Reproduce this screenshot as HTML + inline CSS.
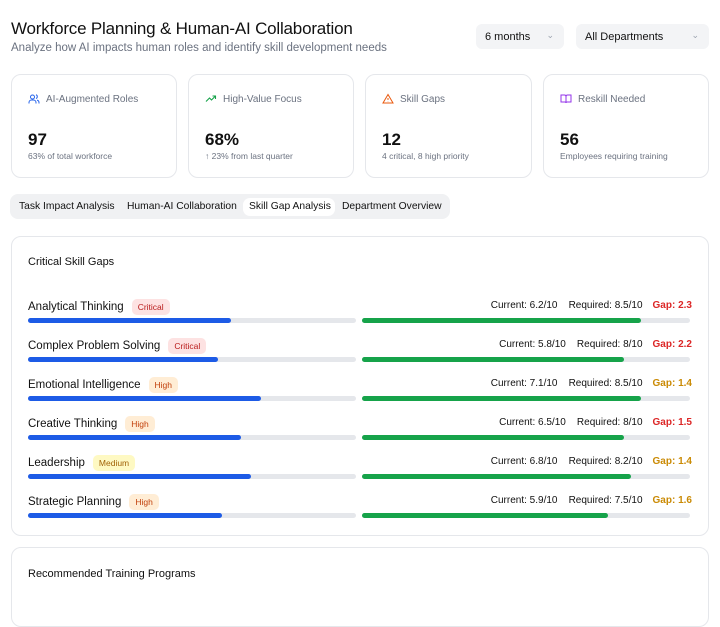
<!DOCTYPE html>
<html><head><style>
*{box-sizing:border-box;margin:0;padding:0}
body{width:720px;height:590px;overflow:hidden;background:#fff;font-family:"Liberation Sans",sans-serif;color:#111;position:relative}
.abs{position:absolute}
h1{position:absolute;left:11px;top:19px;font-size:17px;font-weight:normal;letter-spacing:-0.2px}
.sub{left:11px;top:42px;font-size:11.5px;color:#6b7280}
.sel{top:24px;height:25px;background:#f3f4f6;border-radius:6px;font-size:11px;padding:7px 9px;color:#111}
.sel span{position:absolute;right:10px;top:6px;color:#9ca3af;font-size:9px}
.card{top:74px;height:104px;border:1px solid #e5e7eb;border-radius:10px}
.card .t{position:absolute;left:16px;top:18px;font-size:10px;color:#6b7280;display:flex;align-items:center;gap:6px}
.card .n{position:absolute;left:16px;top:55px;font-size:17px;font-weight:bold}
.card .s{position:absolute;left:16px;top:76px;font-size:8.5px;color:#6b7280}
.tabs{left:10px;top:194px;width:440px;height:25px;background:#f0f1f3;border-radius:8px;font-size:10.3px;white-space:nowrap}
.tabs div{position:absolute;top:4px;height:18px;padding:3px 6px}
.main{left:11px;top:236px;width:698px;height:300px;border:1px solid #e5e7eb;border-radius:10px}
.row{position:absolute;left:28px;width:664px}
.lab{position:absolute;left:0;top:0;font-size:11.5px;display:flex;align-items:center;gap:8px;white-space:nowrap}
.b{font-size:8.5px;padding:3px 6px;border-radius:5px}
.cr{background:#fde2e2;color:#b91c1c}.hi{background:#ffedd5;color:#c2410c}.me{background:#fef9c3;color:#a16207}
.r{position:absolute;right:0;top:1px;font-size:10px;white-space:nowrap}
.r b{margin-left:10px}
.tr{position:absolute;top:19px;height:5px;border-radius:3px;background:#e5e7eb;width:328px}
.tr i{display:block;height:5px;border-radius:3px}
</style></head><body>
<h1>Workforce Planning &amp; Human-AI Collaboration</h1>
<div class="abs sub">Analyze how AI impacts human roles and identify skill development needs</div>
<div class="abs sel" style="left:476px;width:88px">6 months<span>⌄</span></div>
<div class="abs sel" style="left:576px;width:133px">All Departments<span>⌄</span></div>

<div class="abs card" style="left:11px;width:166px"><div class="t"><svg width="12" height="12" viewBox="0 0 24 24" fill="none" stroke="#2563eb" stroke-width="2"><circle cx="9" cy="8" r="4"/><path d="M2 21v-2a5 5 0 0 1 5-5h4a5 5 0 0 1 5 5v2M16 3.5a4 4 0 0 1 0 7.5M22 21v-2a5 5 0 0 0-4-4.8"/></svg>AI-Augmented Roles</div><div class="n">97</div><div class="s">63% of total workforce</div></div>
<div class="abs card" style="left:188px;width:166px"><div class="t"><svg width="12" height="12" viewBox="0 0 24 24" fill="none" stroke="#16a34a" stroke-width="2.2"><path d="M2 17l7-7 4 4 8-8M15 6h6v6"/></svg>High-Value Focus</div><div class="n">68%</div><div class="s">↑ 23% from last quarter</div></div>
<div class="abs card" style="left:365px;width:167px"><div class="t"><svg width="12" height="12" viewBox="0 0 24 24" fill="none" stroke="#ea580c" stroke-width="2"><path d="M12 3L2 20h20z M12 10v4M12 17v.5"/></svg>Skill Gaps</div><div class="n">12</div><div class="s">4 critical, 8 high priority</div></div>
<div class="abs card" style="left:543px;width:166px"><div class="t"><svg width="12" height="12" viewBox="0 0 24 24" fill="none" stroke="#9333ea" stroke-width="2"><path d="M2 4h7a3 3 0 0 1 3 3v13a2 2 0 0 0-2-2H2zM22 4h-7a3 3 0 0 0-3 3v13a2 2 0 0 1 2-2h8z"/></svg>Reskill Needed</div><div class="n">56</div><div class="s">Employees requiring training</div></div>

<div class="abs tabs">
<div style="left:3px">Task Impact Analysis</div>
<div style="left:111px">Human-AI Collaboration</div>
<div style="left:233px;width:92px;background:#fff;border-radius:7px">Skill Gap Analysis</div>
<div style="left:326px">Department Overview</div>
</div>

<div class="abs main"></div>
<div class="abs" style="left:28px;top:256px;font-size:11px">Critical Skill Gaps</div>

<div class="row" style="top:299px"><div class="lab">Analytical Thinking <span class="b cr">Critical</span></div><div class="r">Current: 6.2/10 &nbsp;&nbsp; Required: 8.5/10<b style="color:#dc2626">Gap: 2.3</b></div><div class="tr" style="left:0"><i style="width:62%;background:#1d5be6"></i></div><div class="tr" style="left:334px"><i style="width:85%;background:#16a34a"></i></div></div>
<div class="row" style="top:338px"><div class="lab">Complex Problem Solving <span class="b cr">Critical</span></div><div class="r">Current: 5.8/10 &nbsp;&nbsp; Required: 8/10<b style="color:#dc2626">Gap: 2.2</b></div><div class="tr" style="left:0"><i style="width:58%;background:#1d5be6"></i></div><div class="tr" style="left:334px"><i style="width:80%;background:#16a34a"></i></div></div>
<div class="row" style="top:377px"><div class="lab">Emotional Intelligence <span class="b hi">High</span></div><div class="r">Current: 7.1/10 &nbsp;&nbsp; Required: 8.5/10<b style="color:#ca8a04">Gap: 1.4</b></div><div class="tr" style="left:0"><i style="width:71%;background:#1d5be6"></i></div><div class="tr" style="left:334px"><i style="width:85%;background:#16a34a"></i></div></div>
<div class="row" style="top:416px"><div class="lab">Creative Thinking <span class="b hi">High</span></div><div class="r">Current: 6.5/10 &nbsp;&nbsp; Required: 8/10<b style="color:#dc2626">Gap: 1.5</b></div><div class="tr" style="left:0"><i style="width:65%;background:#1d5be6"></i></div><div class="tr" style="left:334px"><i style="width:80%;background:#16a34a"></i></div></div>
<div class="row" style="top:455px"><div class="lab">Leadership <span class="b me">Medium</span></div><div class="r">Current: 6.8/10 &nbsp;&nbsp; Required: 8.2/10<b style="color:#ca8a04">Gap: 1.4</b></div><div class="tr" style="left:0"><i style="width:68%;background:#1d5be6"></i></div><div class="tr" style="left:334px"><i style="width:82%;background:#16a34a"></i></div></div>
<div class="row" style="top:494px"><div class="lab">Strategic Planning <span class="b hi">High</span></div><div class="r">Current: 5.9/10 &nbsp;&nbsp; Required: 7.5/10<b style="color:#ca8a04">Gap: 1.6</b></div><div class="tr" style="left:0"><i style="width:59%;background:#1d5be6"></i></div><div class="tr" style="left:334px"><i style="width:75%;background:#16a34a"></i></div></div>

<div class="abs" style="left:11px;top:547px;width:698px;height:80px;border:1px solid #e5e7eb;border-radius:10px"></div>
<div class="abs" style="left:28px;top:568px;font-size:11px">Recommended Training Programs</div>
</body></html>
